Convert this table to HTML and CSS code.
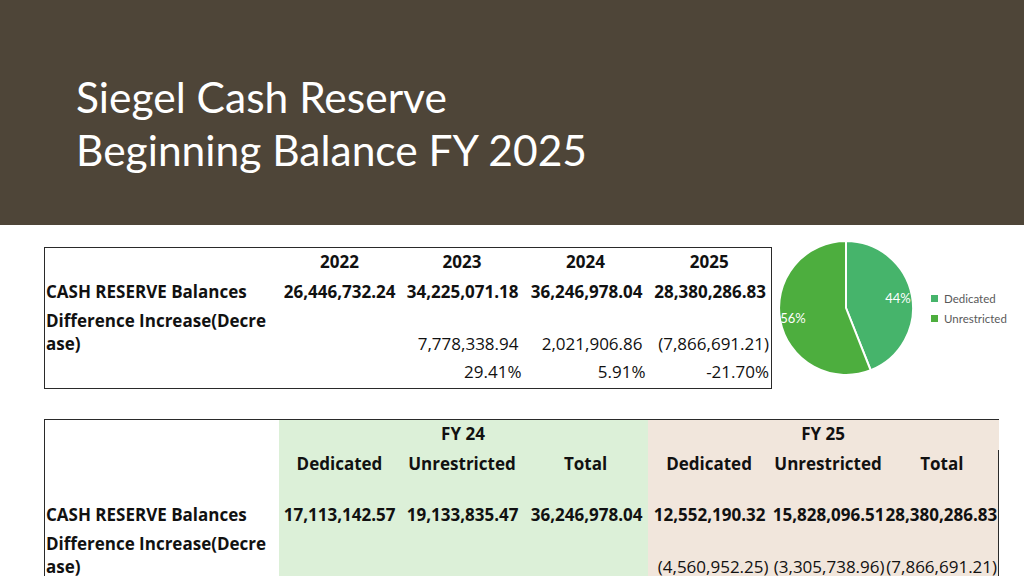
FILE: index.html
```html
<!DOCTYPE html>
<html>
<head>
<meta charset="utf-8">
<link rel="stylesheet" href="styles.css">
</head>
<body>
<header class="banner">
  <h1 class="title">Siegel Cash Reserve<br>Beginning Balance FY 2025</h1>
</header>
<main class="content">
  <section class="top">
    <table class="sheet summary">
      <colgroup>
        <col class="c-label"><col class="c-122"><col class="c-123"><col class="c-124"><col class="c-124">
      </colgroup>
      <tr class="r30">
        <td></td><th>2022</th><th>2023</th><th>2024</th><th>2025</th>
      </tr>
      <tr class="r30 bold">
        <td class="label">CASH RESERVE Balances</td>
        <td class="num acct">26,446,732.24</td>
        <td class="num acct">34,225,071.18</td>
        <td class="num acct">36,246,978.04</td>
        <td class="num acct">28,380,286.83</td>
      </tr>
      <tr class="r52">
        <td class="label bold">Difference Increase(Decre<br>ase)</td>
        <td></td>
        <td class="num acct">7,778,338.94</td>
        <td class="num acct">2,021,906.86</td>
        <td class="num">(7,866,691.21)</td>
      </tr>
      <tr class="r29">
        <td></td><td></td>
        <td class="num pct">29.41%</td>
        <td class="num pct">5.91%</td>
        <td class="num pct">-21.70%</td>
      </tr>
    </table>
    <svg class="pie" width="253" height="141" viewBox="0 0 253 141">
      <path d="M74 61 L74 -6 A67 67 0 0 1 98.7 123.3 Z" fill="#46b46b" stroke="#fff" stroke-width="2"/>
      <path d="M74 61 L98.7 123.3 A67 67 0 1 1 74 -6 Z" fill="#4dae3e" stroke="#fff" stroke-width="2"/>
      <text x="126" y="56" class="pie-lbl" text-anchor="middle">44%</text>
      <text x="21" y="76" class="pie-lbl" text-anchor="middle">56%</text>
      <rect x="159" y="48" width="7" height="7" fill="#46b46b"/>
      <text x="172" y="56" class="legend">Dedicated</text>
      <rect x="159" y="68" width="7" height="7" fill="#4dae3e"/>
      <text x="172" y="76" class="legend">Unrestricted</text>
    </svg>
  </section>
  <table class="sheet detail">
    <colgroup>
      <col class="c-label"><col class="c-122"><col class="c-123"><col class="c-124"><col class="c-123"><col class="c-115"><col class="c-113">
    </colgroup>
    <tr class="r30">
      <td></td>
      <th colspan="3" class="g">FY 24</th>
      <th colspan="3" class="b">FY 25</th>
    </tr>
    <tr class="r30">
      <td></td>
      <th class="g">Dedicated</th><th class="g">Unrestricted</th><th class="g">Total</th>
      <th class="b">Dedicated</th><th class="b">Unrestricted</th><th class="b edge">Total</th>
    </tr>
    <tr class="r23">
      <td></td><td class="g"></td><td class="g"></td><td class="g"></td>
      <td class="b"></td><td class="b"></td><td class="b edge"></td>
    </tr>
    <tr class="r28 bold">
      <td class="label">CASH RESERVE Balances</td>
      <td class="num acct g">17,113,142.57</td>
      <td class="num acct g">19,133,835.47</td>
      <td class="num acct g">36,246,978.04</td>
      <td class="num acct b">12,552,190.32</td>
      <td class="num tight b">15,828,096.51</td>
      <td class="num tight b edge">28,380,286.83</td>
    </tr>
    <tr class="r52">
      <td class="label bold">Difference Increase(Decre<br>ase)</td>
      <td class="g"></td><td class="g"></td><td class="g"></td>
      <td class="num b">(4,560,952.25)</td>
      <td class="num tight b">(3,305,738.96)</td>
      <td class="num tight b edge">(7,866,691.21)</td>
    </tr>
  </table>
</main>
</body>
</html>
```

FILE: styles.css
```css
html, body {
  margin: 0;
  padding: 0;
}
body {
  width: 1024px;
  height: 576px;
  overflow: hidden;
  background: #ffffff;
  font-family: "Open Sans", "Noto Sans", sans-serif;
  color: #111;
}
.banner {
  height: 225px;
  background: #4e4538;
  display: flex;
  align-items: center;
  padding-left: 76px;
  box-sizing: border-box;
}
.title {
  margin: 0;
  margin-top: 20px;
  font-family: Lato, "Liberation Sans", sans-serif;
  font-weight: 400;
  font-size: 42.5px;
  line-height: 53px;
  color: #ffffff;
}
.content {
  padding: 22px 0 0 44px;
}
.top {
  display: flex;
  align-items: flex-start;
}
.sheet {
  border-collapse: collapse;
  table-layout: fixed;
  font-size: 17px;
  line-height: 23px;
}
.sheet td, .sheet th {
  padding: 0 2px 5px 2px;
  vertical-align: bottom;
  white-space: nowrap;
  overflow: visible;
}
.sheet th {
  font-weight: 700;
  text-align: center;
}
.summary {
  width: 727px;
  border: 1.5px solid #2a2a2a;
}
.c-label { width: 234px; }
.c-122 { width: 122px; }
.c-123 { width: 123px; }
.c-124 { width: 124px; }
.c-115 { width: 115px; }
.c-113 { width: 113px; }
.r30 { height: 30px; }
.r29 { height: 29px; }
.r28 { height: 28px; }
.r23 { height: 23px; }
.r52 { height: 52px; }
.bold { font-weight: 700; }
.sheet .label {
  text-align: left;
  padding-left: 1px;
}
.sheet .num {
  text-align: right;
}
.sheet .acct { padding-right: 5px; }
.sheet .tight { padding-right: 1px; padding-left: 0; }
.sheet .pct { padding-right: 2px; }
.pie {
  display: block;
  overflow: visible;
}
.pie-lbl {
  font-family: Lato, "Liberation Sans", sans-serif;
  font-size: 13px;
  fill: #ffffff;
}
.legend {
  font-family: Lato, "Liberation Sans", sans-serif;
  font-size: 11.5px;
  fill: #595959;
}
.detail {
  margin-top: 30px;
  width: 954px;
  border-top: 1.5px solid #2a2a2a;
  border-left: 1.5px solid #2a2a2a;
}
.detail .g { background: #dcf0d8; }
.detail .b { background: #f1e6dc; }
.detail .edge { border-right: 1.5px solid #2a2a2a; }
```
